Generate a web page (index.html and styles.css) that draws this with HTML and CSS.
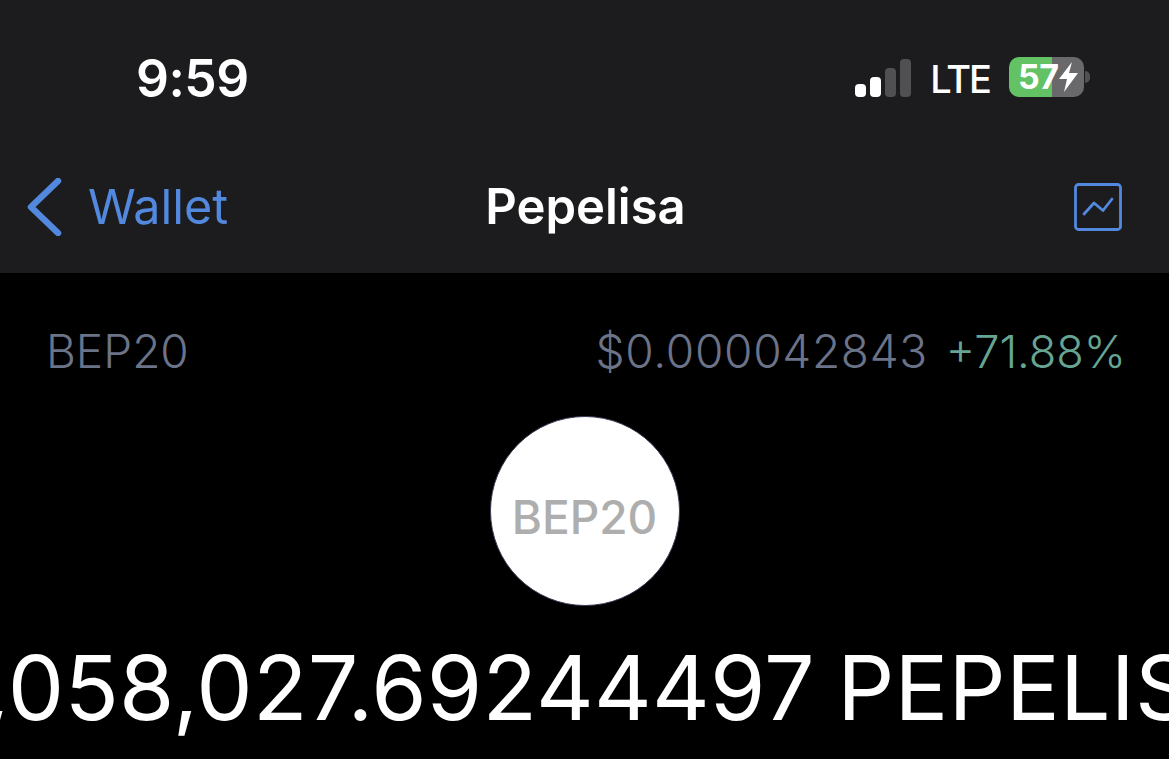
FILE: index.html
```html
<!DOCTYPE html>
<html lang="en">
<head>
  <meta charset="UTF-8">
  <title>Pepelisa</title>
  <link rel="stylesheet" href="styles.css">
</head>
<body>

  <header class="top">
    <!-- status bar -->
    <div class="status">
      <span class="clock">9:59</span>
      <div class="status-right">
        <div class="signal">
          <i class="on s1"></i>
          <i class="on s2"></i>
          <i class="s3"></i>
          <i class="s4"></i>
        </div>
        <span class="lte">LTE</span>
        <div class="battery">
          <div class="battery-body">
            <span class="battery-num">57</span>
            <svg class="bolt" width="19" height="30" viewBox="0 0 19 30"><path d="M13 0 L0 17 L8 17 L5 30 L19 11 L10 11 Z" fill="#fff"/></svg>
          </div>
          <div class="battery-cap"></div>
        </div>
      </div>
    </div>

    <!-- nav bar -->
    <nav class="nav">
      <a class="back">
        <svg width="36" height="58" viewBox="0 0 36 58"><path d="M31 3 L4 29 L31 55" fill="none" stroke="#5289df" stroke-width="6.5" stroke-linecap="round" stroke-linejoin="round"/></svg>
        <span>Wallet</span>
      </a>
      <div class="title">Pepelisa</div>
      <svg class="chart-btn" width="48" height="48" viewBox="0 0 48 48">
        <rect x="1.5" y="1.5" width="45" height="45" rx="3" fill="none" stroke="#5289df" stroke-width="2.8"/>
        <path d="M10 31 L20 20 L29 27.5 L38 16" fill="none" stroke="#5289df" stroke-width="2.8" stroke-linecap="round" stroke-linejoin="round"/>
      </svg>
    </nav>
  </header>

  <main class="content">
    <div class="info">
      <span class="info-type">BEP20</span>
      <div class="info-price">
        <span class="price">$0.000042843</span>
        <span class="change">+71.88%</span>
      </div>
    </div>

    <div class="coin">BEP20</div>

    <div class="amount">1,058,027.69244497 PEPELISA</div>
  </main>

</body>
</html>
```

FILE: styles.css
```css
html, body {
  margin: 0;
  height: 100%;
}

body {
  width: 1169px;
  height: 759px;
  overflow: hidden;
  background: #000;
  color: #fff;
  font-family: Inter, "Liberation Sans", sans-serif;
}

.top {
  background: #1c1c1e;
  height: 273px;
}

/* status bar */
.status {
  height: 157px;
  display: flex;
  justify-content: space-between;
  align-items: flex-start;
  padding: 0 79px 0 136px;
  box-sizing: border-box;
}

.clock {
  margin-top: 48px;
  font-size: 51.5px;
  line-height: 60px;
  font-weight: 600;
  letter-spacing: -0.5px;
}

.status-right {
  display: flex;
  align-items: center;
  margin-top: 57px;
  height: 40px;
}

.signal {
  display: flex;
  align-items: flex-end;
  gap: 4px;
  height: 39px;
}

.signal i {
  display: block;
  width: 11px;
  border-radius: 4px;
  background: #505052;
}

.signal .on {
  background: #fff;
}

.s1 { height: 13px; }
.s2 { height: 20px; }
.s3 { height: 29px; }
.s4 { height: 38px; }

.lte {
  margin-left: 19px;
  padding-top: 4px;
  font-size: 38px;
  line-height: 40px;
  font-weight: 500;
  letter-spacing: -2px;
}

.battery {
  display: flex;
  align-items: center;
  margin-left: 19px;
}

.battery-body {
  width: 75px;
  height: 40px;
  border-radius: 10px;
  display: flex;
  align-items: center;
  padding-left: 9px;
  box-sizing: border-box;
  background: linear-gradient(to right, #62c264 0, #62c264 43px, #69696b 43px);
}

.battery-num {
  font-size: 34px;
  line-height: 40px;
  font-weight: 700;
  letter-spacing: -0.5px;
}

.battery-cap {
  width: 5px;
  height: 12px;
  margin-left: 1px;
  border-radius: 0 6px 6px 0;
  background: #505052;
}

/* nav */
.nav {
  position: relative;
  height: 116px;
  display: flex;
  justify-content: space-between;
  align-items: flex-start;
  padding: 0 47px 0 27px;
}

.back {
  display: flex;
  align-items: center;
  gap: 25px;
  margin-top: 21px;
  color: #5289df;
  font-size: 48.5px;
  line-height: 58px;
}

.title {
  position: absolute;
  left: 2px;
  right: 0;
  top: 21px;
  text-align: center;
  font-size: 49px;
  line-height: 58px;
  font-weight: 600;
}

.chart-btn {
  margin-top: 26px;
}

/* content */
.content {
  display: flex;
  flex-direction: column;
  align-items: center;
  overflow: hidden;
}

.info {
  align-self: stretch;
  display: flex;
  justify-content: space-between;
  padding: 51px 43px 0 46px;
  font-size: 46px;
  line-height: 54px;
  color: #6b7389;
  font-weight: 300;
}

.info-price {
  display: flex;
  align-items: baseline;
  gap: 18px;
}

.price {
  letter-spacing: 0.7px;
}

.change {
  font-size: 45px;
  color: #66a593;
}

.coin {
  width: 188px;
  height: 176px;
  margin-top: 37px;
  padding-top: 12px;
  border: 1px solid #3a3d55;
  border-radius: 50%;
  background: #fff;
  color: #aeaeae;
  display: flex;
  align-items: center;
  justify-content: center;
  font-size: 46px;
  font-weight: 500;
}

.amount {
  margin-top: 28px;
  margin-left: 33px;
  white-space: nowrap;
  flex-shrink: 0;
  font-size: 89.5px;
  line-height: 108px;
  font-weight: 400;
  letter-spacing: 0.2px;
  word-spacing: -3px;
}
```
